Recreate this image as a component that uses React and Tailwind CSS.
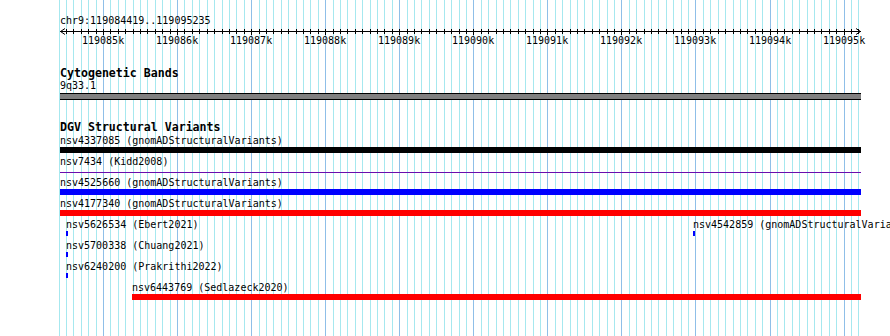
import React from "react";

// visible region of the browser view
const START = 119084419;
const END = 119095235;
const X0 = 60;
const WIDTH = 801;
const SCALE = WIDTH / (END - START);

const bpToX = (bp) => X0 + (bp - START) * SCALE;

const MONO = { fontFamily: '"DejaVu Sans Mono", "Liberation Mono", monospace' };

// one grid line every 100bp, darker every 1kb
const gridLines = [];
for (let bp = 119084400; bp <= END; bp += 100) {
  const x = Math.round(bpToX(bp)) + 0.5;
  if (x < 58 || x > 861) continue;
  gridLines.push({ x, major: bp % 1000 === 0, bp });
}

const ruleLabels = [];
for (let k = 119085; k <= 119095; k++) ruleLabels.push(k);

// DGV rows, each feature: start/end in bp, kind of glyph
const rows = [
  [{ id: "nsv4337085", src: "gnomADStructuralVariants", start: START, end: END, glyph: "bar", color: "bg-black" }],
  [{ id: "nsv7434", src: "Kidd2008", start: START, end: END, glyph: "line", color: "bg-[#6a0dad]" }],
  [{ id: "nsv4525660", src: "gnomADStructuralVariants", start: START, end: END, glyph: "bar", color: "bg-[#0000ff]" }],
  [{ id: "nsv4177340", src: "gnomADStructuralVariants", start: START, end: END, glyph: "bar", color: "bg-[#ff0000]" }],
  [
    { id: "nsv5626534", src: "Ebert2021", start: 119084500, end: 119084527, glyph: "mark", color: "bg-[#0000ff]" },
    { id: "nsv4542859", src: "gnomADStructuralVariants", start: 119092966, end: 119092993, glyph: "mark", color: "bg-[#0000ff]" },
  ],
  [{ id: "nsv5700338", src: "Chuang2021", start: 119084500, end: 119084527, glyph: "mark", color: "bg-[#0000ff]" }],
  [{ id: "nsv6240200", src: "Prakrithi2022", start: 119084500, end: 119084527, glyph: "mark", color: "bg-[#0000ff]" }],
  [{ id: "nsv6443769", src: "Sedlazeck2020", start: 119085391, end: END, glyph: "bar", color: "bg-[#ff0000]" }],
];

const Feature = ({ f }) => {
  const left = Math.round(bpToX(f.start));
  const width = Math.max(2, Math.round(bpToX(f.end)) - left);
  return (
    <div className="absolute top-0 flex flex-col" style={{ left }}>
      <span className="text-[10px] leading-[13px] whitespace-nowrap text-black">
        {f.id} ({f.src})
      </span>
      {f.glyph === "bar" && <div className={`h-[6px] ${f.color}`} style={{ width }} />}
      {f.glyph === "line" && (
        <div className="h-[6px] flex items-center" style={{ width }}>
          <div className={`h-px w-full mt-[3px] ${f.color}`} />
        </div>
      )}
      {f.glyph === "mark" && <div className={`h-[5px] w-[2px] ${f.color}`} />}
    </div>
  );
};

const Ruler = () => (
  <div className="relative h-[20px]">
    <svg className="absolute inset-0" width="890" height="20">
      <line x1={X0} y1="4.5" x2={X0 + WIDTH} y2="4.5" stroke="#000" strokeWidth="1" />
      <polyline points={`${X0 + 5},1.5 ${X0 + 0.5},4.5 ${X0 + 5},7.5`} fill="none" stroke="#000" />
      <polyline points={`${X0 + WIDTH - 5},1.5 ${X0 + WIDTH - 0.5},4.5 ${X0 + WIDTH - 5},7.5`} fill="none" stroke="#000" />
      {gridLines
        .filter((g) => g.x > X0 + 2 && g.x < X0 + WIDTH - 2)
        .map((g) => (
          <line key={g.bp} x1={g.x} y1="2" x2={g.x} y2={g.major ? "8" : "7"} stroke="#000" strokeWidth="1" />
        ))}
    </svg>
    {ruleLabels.map((k) => (
      <span
        key={k}
        className="absolute top-[7px] w-[42px] text-center text-[10px] leading-[13px] text-black"
        style={{ left: Math.round(bpToX(k * 1000)) - 21 }}
      >
        {k}k
      </span>
    ))}
  </div>
);

export default function App() {
  return (
    <div className="relative w-[890px] h-[336px] overflow-hidden bg-white" style={MONO}>
      {/* grid behind everything */}
      <svg className="absolute inset-0 pointer-events-none" width="890" height="336">
        {gridLines.map((g) => (
          <line key={g.bp} x1={g.x} y1="0" x2={g.x} y2="336" stroke={g.major ? "#8fbfe8" : "#a6e8ef"} strokeWidth="1" />
        ))}
      </svg>

      <div className="relative flex flex-col pt-[14px]">
        {/* location and ruler */}
        <div className="pl-[60px] text-[10px] leading-[13px] text-black">chr9:119084419..119095235</div>
        <Ruler />

        {/* cytogenetic bands */}
        <div className="mt-[21px] pl-[60px] flex flex-col">
          <div className="text-[11.6px] leading-[11px] font-bold text-black">Cytogenetic Bands</div>
          <div className="text-[10px] leading-[13px] text-black">9q33.1</div>
          <div className="mt-px h-[7px] w-[801px] border-y border-black bg-[#808080]" />
        </div>

        {/* DGV track */}
        <div className="mt-[21px] flex flex-col">
          <div className="pl-[60px] text-[11.6px] leading-[13px] font-bold text-black">DGV Structural Variants</div>
          {rows.map((row, i) => (
            <div key={i} className="relative h-[21px]">
              {row.map((f) => (
                <Feature key={f.id} f={f} />
              ))}
            </div>
          ))}
        </div>
      </div>
    </div>
  );
}
